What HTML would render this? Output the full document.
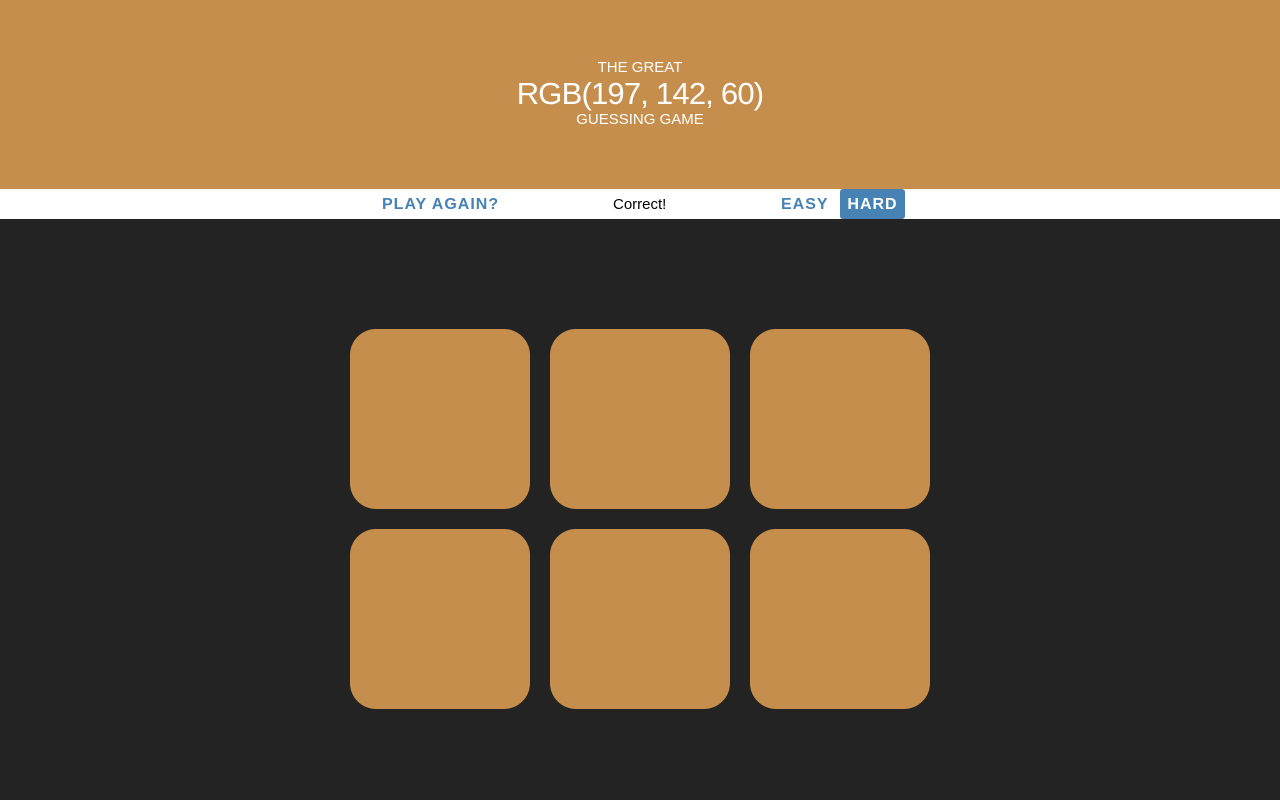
<!DOCTYPE html>
<html><head><style>
*{margin:0;padding:0;box-sizing:border-box}
body{width:1280px;height:800px;background:#232323;font-family:"Liberation Sans",sans-serif;overflow:hidden;position:relative}
#h{position:absolute;left:0;top:0;width:1280px;height:189px;background:#c68e4c;color:#fff;text-align:center}
.t{position:absolute;width:100%;left:0}
#bar{position:absolute;top:189px;left:0;width:1280px;height:30px;background:#fff}
.b{position:absolute;top:0;height:30px;line-height:32px;color:#4682b4;font-weight:bold;font-size:16px;letter-spacing:1px}
.sq{position:absolute;width:180px;height:180px;border-radius:26px;background:#c68e4c}
</style></head><body>
<div id="h">
<div class="t" style="top:59px;font-size:15px">THE GREAT</div>
<div class="t" style="top:76px;font-size:31px;letter-spacing:-0.8px">RGB(197, 142, 60)</div>
<div class="t" style="top:111px;font-size:15px">GUESSING GAME</div>
</div>
<div id="bar">
<div class="b" style="left:382px">PLAY AGAIN?</div>
<div class="b" style="left:613px;color:#000;font-weight:normal;letter-spacing:0;font-size:15px">Correct!</div>
<div class="b" style="left:781px">EASY</div>
<div class="b" style="left:840px;width:65px;background:#4682b4;color:#fff;text-align:center;border-radius:3px">HARD</div>
</div>
<div class="sq" style="left:350px;top:329px"></div>
<div class="sq" style="left:550px;top:329px"></div>
<div class="sq" style="left:750px;top:329px"></div>
<div class="sq" style="left:350px;top:529px"></div>
<div class="sq" style="left:550px;top:529px"></div>
<div class="sq" style="left:750px;top:529px"></div>
</body></html>
